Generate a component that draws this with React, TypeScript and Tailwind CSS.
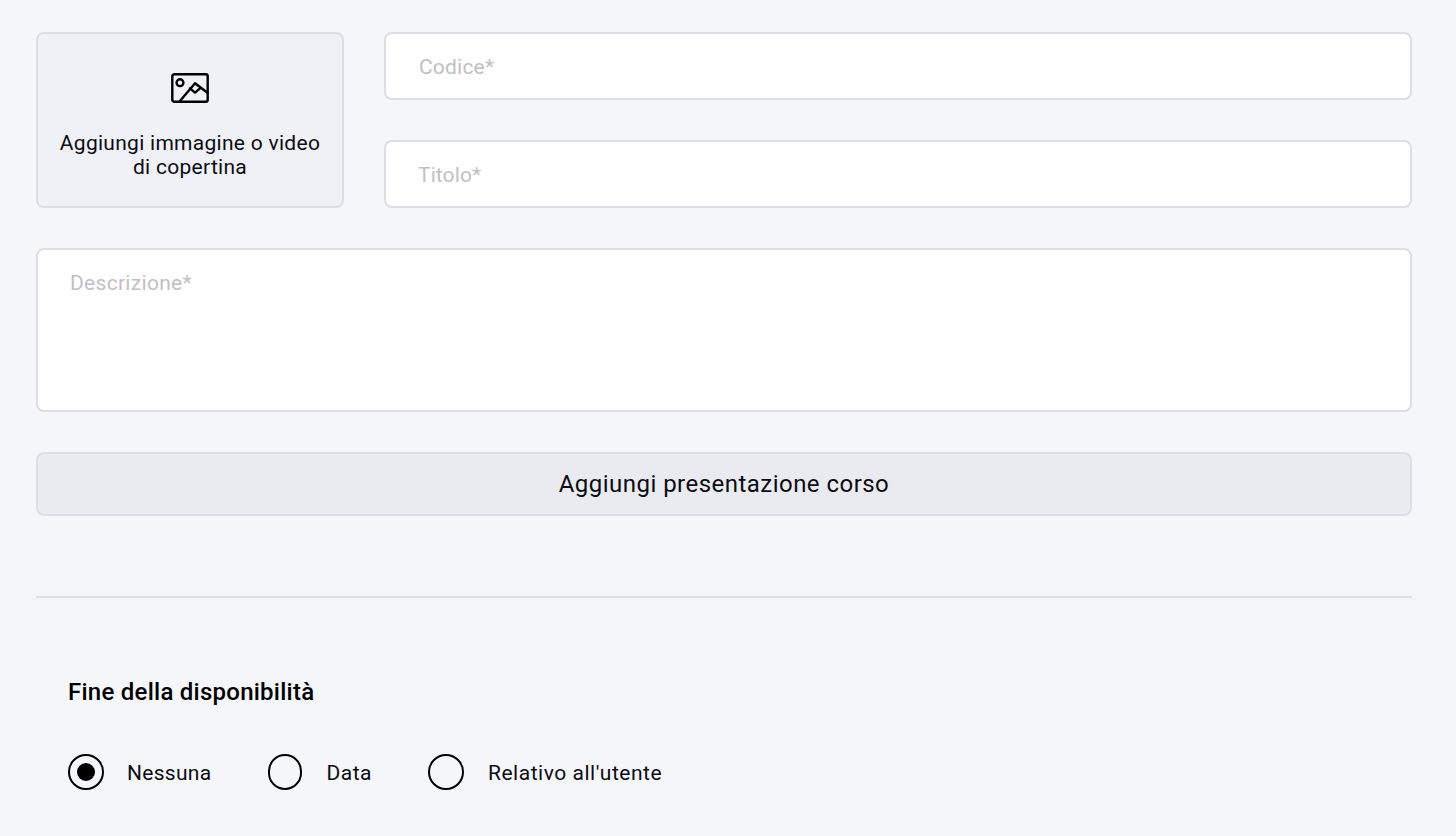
import React from "react";

function Radio({ label, checked, radioClass, gapClass, textClass }: { label: string; checked?: boolean; radioClass: string; gapClass: string; textClass: string }) {
  return (
    <label className={`flex items-center ${gapClass}`}>
      <span className={`flex h-[36px] items-center justify-center rounded-full border-2 border-black ${radioClass}`}>
        {checked && <span className="h-[18px] w-[18px] rounded-full bg-black" />}
      </span>
      <span className={`pt-[1px] text-[21px] leading-[24px] text-[#0b0b12] ${textClass}`}>{label}</span>
    </label>
  );
}

export default function App() {
  return (
    <div className="h-[836px] overflow-hidden bg-[#f5f6fa] pl-[36px] pr-[44px] pt-[32px] font-['Roboto',sans-serif]">
      <div className="flex gap-[40px]">
        <button className="flex h-[176px] w-[308px] shrink-0 flex-col items-center rounded-[8px] border-2 border-[#dcdde8] bg-[#f0f1f7] px-[16px] pt-[38px] text-black">
          <svg width="40" height="32" viewBox="0 0 40 32" fill="none" stroke="black" strokeWidth="2.4" strokeLinejoin="round" strokeLinecap="round">
            <rect x="2.3" y="2.3" width="35.4" height="27.4" rx="2" />
            <circle cx="10" cy="10.7" r="3.4" />
            <path d="M10 29 L25 11.3 L37.5 20.7" />
            <path d="M20 16.3 L25 20.7 L30 16.3" />
          </svg>
          <span className="mt-[27px] text-[21px] leading-[24px] tracking-[0.28px] text-[#0b0b12]">Aggiungi immagine o video di copertina</span>
        </button>
        <div className="flex flex-1 flex-col gap-[40px]">
          <input
            placeholder="Codice*"
            className="h-[68px] rounded-[8px] border-2 border-[#dcdde8] bg-white px-[33px] pt-[1px] text-[21px] tracking-[0.2px] outline-none placeholder:text-[#bfc0c5]"
          />
          <input
            placeholder="Titolo*"
            className="h-[68px] rounded-[8px] border-2 border-[#dcdde8] bg-white px-[32px] pt-[1px] text-[21px] tracking-[0.1px] outline-none placeholder:text-[#bfc0c5]"
          />
        </div>
      </div>
      <textarea
        placeholder="Descrizione*"
        className="mt-[40px] block h-[164px] w-full resize-none rounded-[8px] border-2 border-[#dcdde8] bg-white px-[32px] py-[20px] text-[21px] leading-[26px] tracking-[0.3px] outline-none placeholder:text-[#bfc0c5]"
      />
      <button className="mt-[40px] flex h-[64px] w-full items-center justify-center rounded-[8px] border-2 border-[#dcdde8] bg-[#eaebf0] text-[24px] tracking-[0.47px] text-[#0b0b12]">
        Aggiungi presentazione corso
      </button>
      <div className="mt-[80px] h-[2px] bg-[#dcdde8]" />
      <div className="pl-[32px]">
        <h2 className="mt-[78px] text-[24px] font-medium leading-[32px] tracking-[0.25px] text-black">Fine della disponibilità</h2>
        <div className="mt-[46px] flex">
          <Radio label="Nessuna" checked radioClass="w-[36px]" gapClass="gap-[23px]" textClass="tracking-[0.3px]" />
          <div className="ml-[56px]">
            <Radio label="Data" radioClass="w-[34px]" gapClass="gap-[25px]" textClass="tracking-[0.5px]" />
          </div>
          <div className="ml-[56px]">
            <Radio label="Relativo all'utente" radioClass="w-[36px]" gapClass="gap-[24px]" textClass="tracking-[0.52px]" />
          </div>
        </div>
      </div>
    </div>
  );
}
